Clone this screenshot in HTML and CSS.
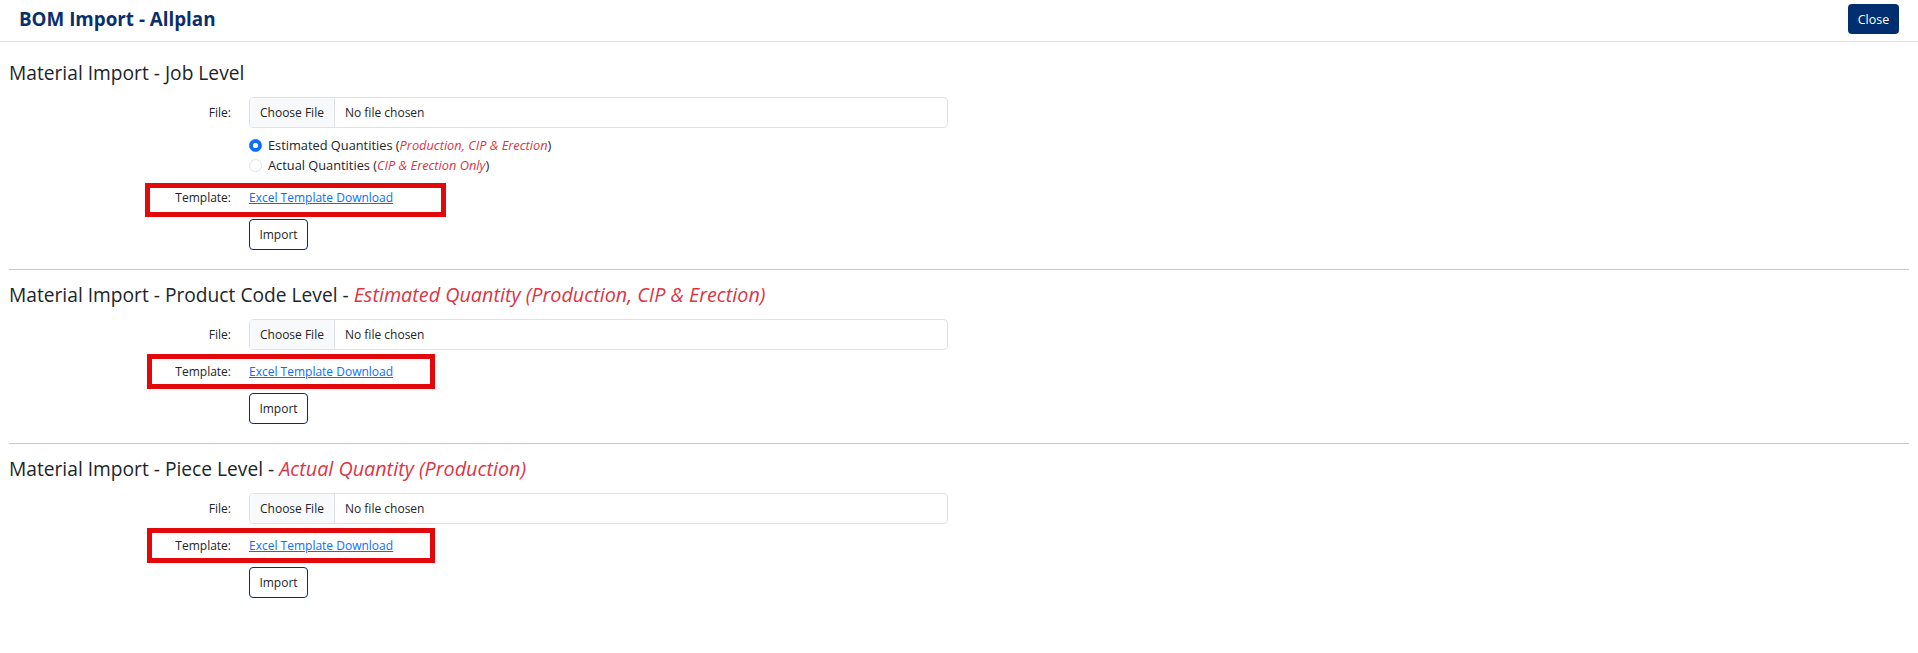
FILE: index.html
```html
<!DOCTYPE html>
<html lang="en">
<head>
<meta charset="utf-8">
<title>BOM Import - Allplan</title>
<link rel="stylesheet" href="styles.css">
</head>
<body>
<header class="topbar">
  <h1 class="app-title">BOM Import - Allplan</h1>
  <button class="btn-close" type="button">Close</button>
</header>
<main class="page">
  <section class="import-section">
    <h2 class="section-title">Material Import - Job Level</h2>
    <div class="form-row">
      <span class="row-label">File:</span>
      <div class="file-input"><span class="file-btn">Choose File</span><span class="file-name">No file chosen</span></div>
    </div>
    <div class="form-row radio-row">
      <span class="row-label"></span>
      <div class="radio-group">
        <label class="radio-line"><span class="radio checked"></span>Estimated Quantities (<em>Production, CIP &amp; Erection</em>)</label>
        <label class="radio-line"><span class="radio"></span>Actual Quantities (<em>CIP &amp; Erection Only</em>)</label>
      </div>
    </div>
    <div class="form-row template-row wide">
      <span class="row-label">Template:</span>
      <a href="#" class="tpl-link">Excel Template Download</a>
    </div>
    <div class="form-row">
      <span class="row-label"></span>
      <button class="btn-import" type="button">Import</button>
    </div>
  </section>
  <hr class="divider">
  <section class="import-section">
    <h2 class="section-title">Material Import - Product Code Level - <em>Estimated Quantity (Production, CIP &amp; Erection)</em></h2>
    <div class="form-row">
      <span class="row-label">File:</span>
      <div class="file-input"><span class="file-btn">Choose File</span><span class="file-name">No file chosen</span></div>
    </div>
    <div class="form-row template-row">
      <span class="row-label">Template:</span>
      <a href="#" class="tpl-link">Excel Template Download</a>
    </div>
    <div class="form-row">
      <span class="row-label"></span>
      <button class="btn-import" type="button">Import</button>
    </div>
  </section>
  <hr class="divider">
  <section class="import-section">
    <h2 class="section-title">Material Import - Piece Level - <em>Actual Quantity (Production)</em></h2>
    <div class="form-row">
      <span class="row-label">File:</span>
      <div class="file-input"><span class="file-btn">Choose File</span><span class="file-name">No file chosen</span></div>
    </div>
    <div class="form-row template-row">
      <span class="row-label">Template:</span>
      <a href="#" class="tpl-link">Excel Template Download</a>
    </div>
    <div class="form-row">
      <span class="row-label"></span>
      <button class="btn-import" type="button">Import</button>
    </div>
  </section>
</main>
</body>
</html>
```
FILE: styles.css
```css
*, *::before, *::after { box-sizing: border-box; }

body {
  margin: 0;
  background: #fff;
  color: #212529;
  font-family: "Open Sans", "Noto Sans", sans-serif;
}

.topbar {
  display: flex;
  justify-content: space-between;
  align-items: flex-start;
  height: 42px;
  padding: 4px 19px 0;
  border-bottom: 1px solid #dee2e6;
}

.app-title {
  margin: 0;
  font-size: 18.8px;
  line-height: 30px;
  font-weight: 700;
  color: #0b2f6b;
}

.btn-close {
  width: 51px;
  height: 30px;
  padding: 0;
  border: none;
  border-radius: 4px;
  background: #002e6e;
  color: #fff;
  font-family: inherit;
  font-size: 12.5px;
}

.page {
  padding: 19px 9px 0;
}

.import-section {
  padding-bottom: 19px;
}

.section-title {
  margin: 0 0 12px;
  font-size: 19.2px;
  line-height: 24px;
  font-weight: 500;
  color: #212529;
}

.section-title em {
  color: #dc3545;
  font-style: italic;
  font-size: 1.03em;
}

.divider {
  margin: 0 0 13px;
  border: 0;
  border-top: 1px solid #c9c9c9;
}

.form-row {
  position: relative;
  display: flex;
  align-items: center;
  margin-bottom: 4px;
  font-size: 12px;
}

.form-row:last-child { margin-bottom: 0; }

.row-label {
  flex: none;
  width: 222px;
  margin-right: 18px;
  text-align: right;
}

.file-input {
  display: flex;
  width: 699px;
  height: 31px;
  border: 1px solid #dee2e6;
  border-radius: 4px;
  overflow: hidden;
}

.file-btn {
  display: flex;
  align-items: center;
  width: 85px;
  padding-left: 10px;
  background: #f8f9fa;
  border-right: 1px solid #dee2e6;
}

.file-name {
  display: flex;
  align-items: center;
  padding-left: 10px;
}

.radio-row {
  padding-top: 3px;
  margin-bottom: 5px;
  font-size: 12.8px;
}

.radio-group {
  display: flex;
  flex-direction: column;
}

.radio-line {
  display: flex;
  align-items: center;
  height: 20px;
}

.radio-line em {
  color: #dc3545;
  font-style: italic;
}

.radio {
  width: 13px;
  height: 13px;
  margin-right: 6px;
  border: 1px solid #dee2e6;
  border-radius: 50%;
  background: #fff;
}

.radio.checked {
  border-color: #0d6efd;
  background: radial-gradient(circle, #fff 0 2.4px, #0d6efd 3px);
}

.template-row {
  height: 35px;
}

.template-row::after {
  content: "";
  position: absolute;
  top: 0;
  bottom: 0;
  left: 138px;
  width: 288px;
  border: 5px solid #e3090b;
  pointer-events: none;
}

.template-row.wide::after {
  top: 3px;
  left: 136px;
  width: 301px;
  bottom: -2px;
}

.tpl-link {
  color: #0d6efd;
  text-decoration: underline;
}

.btn-import {
  width: 59px;
  height: 31px;
  padding: 0;
  border: 1px solid #0b2d64;
  border-radius: 4px;
  background: #fff;
  color: #212529;
  font-family: inherit;
  font-size: 12px;
}
```
